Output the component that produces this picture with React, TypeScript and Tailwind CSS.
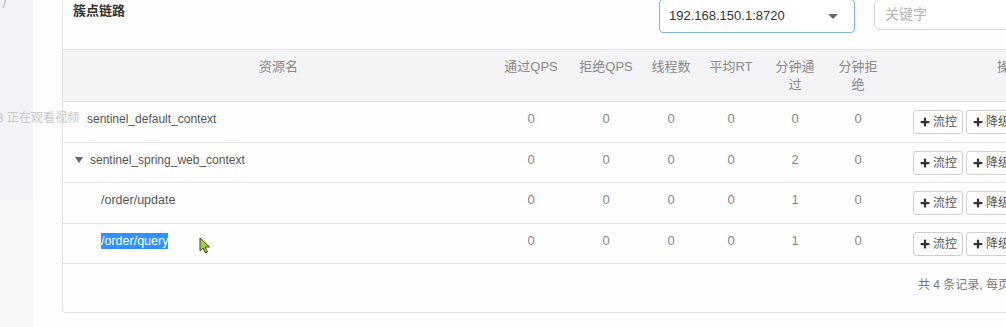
import { Plus } from 'lucide-react'

const sans = "font-['Liberation_Sans','Noto_Sans_CJK_SC',sans-serif]"

interface Row {
  name: string
  level: 0 | 1 | 2
  pass: number
  block: number
  threads: number
  rt: number
  minPass: number
  minBlock: number
  selected?: boolean
}

const rows: Row[] = [
  { name: 'sentinel_default_context', level: 0, pass: 0, block: 0, threads: 0, rt: 0, minPass: 0, minBlock: 0 },
  { name: 'sentinel_spring_web_context', level: 1, pass: 0, block: 0, threads: 0, rt: 0, minPass: 2, minBlock: 0 },
  { name: '/order/update', level: 2, pass: 0, block: 0, threads: 0, rt: 0, minPass: 1, minBlock: 0 },
  { name: '/order/query', level: 2, pass: 0, block: 0, threads: 0, rt: 0, minPass: 1, minBlock: 0, selected: true },
]

const cols = 'grid grid-cols-[431px_74px_76px_54px_66px_62px_64px_240px]'

function ActionButton({ label }: { label: string }) {
  return (
    <button className="h-[24px] px-[5px] flex items-center gap-[2px] border border-[#cfcfcf] rounded-[3px] bg-white text-[12px] text-[#555]">
      <Plus size={12} strokeWidth={4.5} className="text-[#333]" />
      {label}
    </button>
  )
}

function NameCell({ row }: { row: Row }) {
  if (row.level === 0) {
    return <div className="pl-[24px] pt-[8px] leading-[18px] text-[12px] text-[#555]">{row.name}</div>
  }
  if (row.level === 1) {
    return (
      <div className="pl-[12px] pt-[8px] leading-[18px] text-[12px] text-[#555]">
        <span className="inline-block align-middle mr-[7px] w-0 h-0 border-l-[4px] border-r-[4px] border-t-[6px] border-l-transparent border-r-transparent border-t-[#666]" />
        {row.name}
      </div>
    )
  }
  return (
    <div className="pl-[38px] pt-[8px] leading-[18px] text-[12.5px] text-[#555]">
      {row.selected ? (
        <span className="bg-[#3390ff] text-white py-[1px]">{row.name}</span>
      ) : (
        row.name
      )}
    </div>
  )
}

export default function App() {
  const headers = ['通过QPS', '拒绝QPS', '线程数', '平均RT', '分钟通过', '分钟拒绝', '操作']

  return (
    <div className={`${sans} relative w-[1006px] h-[327px] overflow-hidden flex bg-[#fdfdfd]`}>
      {/* left strip */}
      <div className="w-[33px] shrink-0 flex flex-col">
        <div className="h-[200px] bg-[#f3f2f6] pl-[3px] text-[10px] leading-[10px] text-[#aaa]">/</div>
        <div className="flex-1 bg-[#f8f8fa]" />
      </div>
      <div className="w-[29px] shrink-0" />

      {/* card */}
      <div className="w-[1100px] shrink-0 h-[313px] bg-[#fefefe] border-l border-b border-[#e3e3e6] rounded-bl-[4px] flex flex-col">
        <div className="h-[49px] shrink-0 flex items-start">
          <div className="pl-[10px] pt-[2px] text-[13px] leading-[18px] font-bold text-[#333] w-[596px]">簇点链路</div>
          <div className="-mt-px w-[196px] h-[34px] border border-[#7fb2dc] rounded-[4px] flex items-center justify-between pl-[9px] pr-[16px] text-[13px] text-[#333] bg-white">
            <span>192.168.150.1:8720</span>
            <span className="w-0 h-0 border-l-[5px] border-r-[5px] border-t-[5px] border-l-transparent border-r-transparent border-t-[#666]" />
          </div>
          <div className="ml-[19px] -mt-px w-[200px] h-[31px] border border-[#d6d6d6] rounded-[6px] flex items-center pl-[10px] text-[14px] text-[#b5b5b5] bg-white">
            关键字
          </div>
        </div>

        {/* header */}
        <div className={`${cols} h-[53px] shrink-0 bg-[#f4f4f6] border-t border-b border-[#e6e6e8] text-[13px] leading-[18px] text-[#888] text-center`}>
          <div className="pt-[8px]">资源名</div>
          {headers.map((h) => (
            <div key={h} className="pt-[8px] px-[7px]">{h}</div>
          ))}
        </div>

        {rows.map((r) => (
          <div key={r.name} className={`${cols} h-[40.5px] shrink-0 border-b border-[#e8e8ea]`}>
            <NameCell row={r} />
            {[r.pass, r.block, r.threads, r.rt, r.minPass, r.minBlock].map((v, i) => (
              <div key={i} className="pt-[8px] leading-[18px] text-center text-[13px] text-[#888]">{v}</div>
            ))}
            <div className="pl-[23px] pt-[8px] flex gap-[3px]">
              <ActionButton label="流控" />
              <ActionButton label="降级" />
            </div>
          </div>
        ))}

        <div className="pl-[855px] pt-[12px] text-[12px] leading-[18px] text-[#777]">共 4 条记录, 每页 10 条记录</div>
      </div>

      {/* video watermark */}
      <div className="absolute left-[-3px] top-[110px] text-[12px] leading-[16px] text-[#c8c8cc]">3 正在观看视频</div>

      {/* mouse cursor */}
      <svg className="absolute left-[199px] top-[237px]" width="12" height="17" viewBox="0 0 12 17">
        <path d="M1 1 L1 14 L4 11 L6.5 16 L8.5 15 L6 10 L10.5 10 Z" fill="#a4d234" stroke="#3a4a10" strokeWidth="1" />
      </svg>
    </div>
  )
}
